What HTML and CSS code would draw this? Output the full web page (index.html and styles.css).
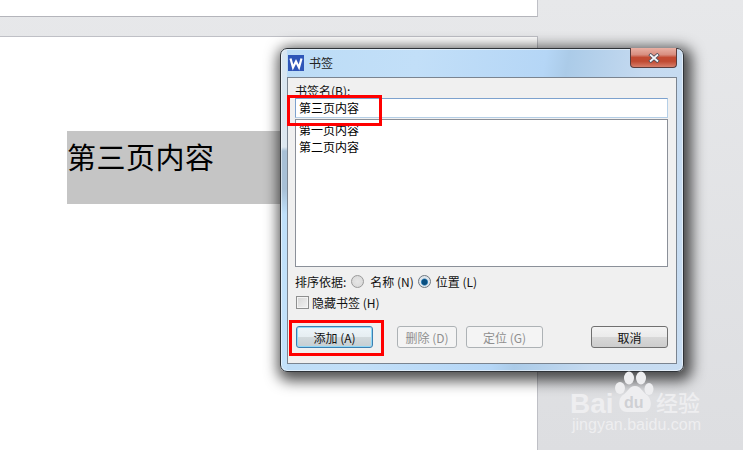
FILE: index.html
```html
<!DOCTYPE html>
<html lang="zh">
<head>
<meta charset="utf-8">
<title>书签</title>
<link rel="stylesheet" href="styles.css">
</head>
<body>
<div class="workspace">
  <div class="page-stack">
    <div class="page page-top"></div>
    <div class="page page-main">
      <div class="selection"><span>第三页内容</span></div>
    </div>
  </div>
</div>

<section class="dialog">
  <header class="titlebar">
    <span class="app-icon">
      <svg viewBox="0 0 16 16" width="16" height="16"><rect width="16" height="16" fill="#2f56b8"/><path d="M2.5 3.5 L5 12.5 L8 6.5 L11 12.5 L13.5 3.5" fill="none" stroke="#fff" stroke-width="2.2"/></svg>
    </span>
    <span class="title-text">书签</span>
    <span class="close">
      <svg viewBox="0 0 12 10" width="12" height="10"><path d="M1.5 1 L10.5 9 M10.5 1 L1.5 9" stroke="#4a4f5c" stroke-width="3.4"/><path d="M2 1.5 L10 8.5 M10 1.5 L2 8.5" stroke="#f4f5f8" stroke-width="1.8"/></svg>
    </span>
  </header>
  <div class="panel">
    <div class="label">书签名(B):</div>
    <div class="name-input">第三页内容</div>
    <ul class="listbox">
      <li>第一页内容</li>
      <li>第二页内容</li>
    </ul>
    <div class="sort-row">
      <span>排序依据:</span>
      <span class="radio"></span><span class="opt">名称 (N)</span>
      <span class="radio on"></span><span class="opt">位置 (L)</span>
    </div>
    <div class="check-row">
      <span class="checkbox"></span><span>隐藏书签 (H)</span>
    </div>
    <div class="buttons">
      <button class="btn btn-default">添加 (A)</button>
      <button class="btn btn-off btn-del">删除 (D)</button>
      <button class="btn btn-off btn-loc">定位 (G)</button>
      <button class="btn btn-cancel">取消</button>
    </div>
  </div>
</section>

<div class="mark mark-input"></div>
<div class="mark mark-add"></div>

<div class="watermark">
  <span class="wm-bai">Bai</span>
  <svg class="wm-paw" viewBox="0 0 40 42" width="40" height="42">
    <g fill="#eeeef0">
      <ellipse cx="6" cy="17" rx="5" ry="6"/>
      <ellipse cx="15" cy="7" rx="5" ry="6.5"/>
      <ellipse cx="27" cy="7" rx="5" ry="6.5"/>
      <ellipse cx="35" cy="18" rx="4.5" ry="6"/>
      <path d="M21 15 C15 15 14 21 9 24 C3 28 4 41 13 41 L30 41 C38 41 39 29 33 24 C28 21 27 15 21 15 Z"/>
    </g>
  </svg>
  <span class="wm-du">du</span>
  <span class="wm-cn">经验</span>
  <span class="wm-url">jingyan.baidu.com</span>
</div>
</body>
</html>
```
FILE: styles.css
```css
* { box-sizing: border-box; }
html, body { margin: 0; padding: 0; }
body {
  width: 743px;
  height: 450px;
  overflow: hidden;
  position: relative;
  font-family: "Noto Sans CJK SC", "Liberation Sans", sans-serif;
  font-size: 12px;
  color: #111;
}
.workspace {
  width: 743px;
  height: 450px;
  background: linear-gradient(#e7e8ea, #dddee1);
}
.page-stack {
  width: 538px;
  height: 450px;
  display: flex;
  flex-direction: column;
  gap: 19px;
}
.page {
  background: #fff;
  border-right: 1px solid #bfc0c6;
}
.page-top {
  height: 17px;
  border-bottom: 1px solid #b4b5bb;
}
.page-main {
  flex: 1;
  border-top: 1px solid #bfc0c6;
  padding: 94px 0 0 67px;
}
.selection {
  width: 220px;
  height: 73px;
  background: #c5c5c5;
  font-size: 29px;
  line-height: 50px;
  letter-spacing: .5px;
  color: #000;
  white-space: nowrap;
}

.dialog {
  position: absolute;
  left: 280px;
  top: 48px;
  width: 404px;
  height: 324px;
  padding: 0 6px 7px 6px;
  border: 1px solid #2f3338;
  border-radius: 7px;
  background:
    linear-gradient(#d8e6f2 0, #dde7ef 98px, #a8c0d6 102px, #a8c0d6 140px, #bfe0fa 165px, #c4e2fa 100%) 0 0 / 6px 100% no-repeat,
    linear-gradient(100deg, #bcdcf6 0%, #c2dff8 30%, #b5d6f6 58%, #abcbe8 63%, #c5daf0 80%, #c8ddf2 100%);
  box-shadow: 0 0 0 1px rgba(255,255,255,.5) inset, 3px 4px 14px 5px rgba(0,0,0,.68);
  display: flex;
  flex-direction: column;
}
.titlebar {
  height: 28px;
  flex: none;
  display: flex;
  align-items: center;
  gap: 5px;
  position: relative;
}
.app-icon { width: 16px; height: 16px; display: block; margin-left: 1px; }
.app-icon svg { display: block; }
.title-text { font-size: 12px; color: #222; margin-top: -2px; }
.close {
  position: absolute;
  right: 0;
  top: -1px;
  width: 47px;
  height: 20px;
  border: 1px solid #5a3c3c;
  border-top: none;
  border-radius: 0 0 4px 4px;
  background: linear-gradient(#e9b0a4 0%, #d88e80 35%, #c24a32 50%, #c04a32 70%, #d77f6c 100%);
  display: flex;
  align-items: center;
  justify-content: center;
}
.close svg { display: block; }
.panel {
  flex: 1;
  background: #f0f0f0;
  border: 1px solid #7a8490;
  padding: 5px 8px 0 7px;
  display: flex;
  flex-direction: column;
}
.label { height: 15px; line-height: 15px; }
.name-input {
  height: 20px;
  line-height: 18px;
  background: #fff;
  border: 1px solid #7da2ce;
  border-right-color: #b5cfe7;
  border-bottom-color: #b5cfe7;
  padding-left: 3px;
  color: #000;
}
.listbox {
  list-style: none;
  margin: 1px 0 0;
  padding: 1px 0 0 3px;
  height: 148px;
  background: #fff;
  border: 1px solid #8b9099;
  line-height: 17px;
  color: #000;
}
.listbox li { height: 17px; }
.sort-row {
  margin-top: 5px;
  height: 18px;
  display: flex;
  align-items: center;
}
.radio {
  width: 13px;
  height: 13px;
  border-radius: 50%;
  border: 1px solid #9a9a9a;
  background: radial-gradient(circle at 50% 50%, #e6e6e6, #d6d6d6);
  margin: 0 6px 0 5px;
}
.radio.on {
  background: radial-gradient(circle at 50% 55%, #0a4f80 0 2.5px, #2b7cb4 3px, #dfe6ec 4px);
  border-color: #6f7880;
  margin: 0 5px 0 3px;
}
.opt { margin-right: 1px; }
.check-row {
  margin-top: 3px;
  height: 18px;
  display: flex;
  align-items: center;
  gap: 3px;
}
.checkbox {
  width: 13px;
  height: 13px;
  border: 1px solid #8e8f8f;
  background: linear-gradient(135deg, #d6d6d6, #f2f2f2);
  box-shadow: inset 0 0 0 1px #f4f4f4;
  margin-left: 1px;
}
.buttons {
  margin-top: 15px;
  height: 22px;
  display: flex;
  padding-left: 1px;
}
.btn {
  font: inherit;
  height: 22px;
  padding: 0;
  border-radius: 3px;
  border: 1px solid #707070;
  background: linear-gradient(#f3f3f3 0%, #ebebeb 48%, #d8d8d8 52%, #cdcdcd 100%);
  color: #111;
}
.btn-default {
  width: 77px;
  border-color: #3c7fb1;
  background: linear-gradient(#eef6fa 0%, #e6eef2 48%, #d2dadd 52%, #c6ced2 100%);
  box-shadow: inset 0 0 0 1px #8fd8f6;
}
.btn-off {
  border-color: #adb2b5;
  background: #f4f4f4;
  color: #8f8f8f;
}
.btn-del { width: 60px; margin-left: 24px; }
.btn-loc { width: 77px; margin-left: 9px; }
.btn-cancel { width: 77px; margin-left: 48px; }

.mark {
  position: absolute;
  border: 3px solid #f00;
}
.mark-input { left: 287px; top: 95px; width: 95px; height: 31px; }
.mark-add { left: 289px; top: 320px; width: 95px; height: 36px; }

.watermark {
  position: absolute;
  left: 560px;
  top: 365px;
  width: 170px;
  height: 75px;
  color: #eeeef0;
}
.watermark span { position: absolute; white-space: nowrap; line-height: 1; }
.wm-paw { position: absolute; left: 54px; top: 6px; }
.wm-bai {
  left: 10px;
  top: 25px;
  font-family: "Liberation Sans", sans-serif;
  font-weight: 700;
  font-size: 28px;
}
.wm-du {
  left: 64px;
  top: 30px;
  font-family: "Liberation Sans", sans-serif;
  font-weight: 700;
  font-size: 16px;
  color: #cfd0d4;
}
.wm-cn { left: 96px; top: 25px; font-size: 22px; font-weight: 500; }
.wm-url {
  left: 12px;
  top: 52px;
  font-family: "Liberation Sans", sans-serif;
  font-size: 16px;
}
```
